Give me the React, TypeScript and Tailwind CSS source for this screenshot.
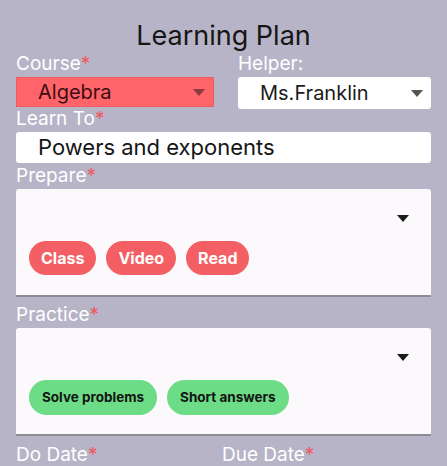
import type { ReactNode } from "react";

const font = { fontFamily: "Inter, 'Noto Sans', sans-serif" };

function Label({ children, required = true }: { children: ReactNode; required?: boolean }) {
  return (
    <div className="text-[19px] leading-[22px] text-white">
      {children}
      {required && <span className="text-[#f0575c]">*</span>}
    </div>
  );
}

function Caret({ className = "" }: { className?: string }) {
  return (
    <svg width="12" height="7" viewBox="0 0 12 7" className={className}>
      <path d="M0 0h12L6 7z" fill="currentColor" />
    </svg>
  );
}

function ChipBox({ chips, tone }: { chips: string[]; tone: "red" | "green" }) {
  return (
    <div className="relative h-[108px] rounded-t-[3px] border-b-2 border-[#8d8a96] bg-[#fbf9fb]">
      <Caret className="absolute right-[22px] top-[26px] text-[#1b1b1b]" />
      <div className="absolute left-[13px] top-[52px] flex gap-[10px]">
        {chips.map((c) =>
          tone === "red" ? (
            <span
              key={c}
              className="flex h-[34px] items-center rounded-full bg-[#f45f65] px-[12px] text-[16px] font-bold text-white"
            >
              {c}
            </span>
          ) : (
            <span
              key={c}
              className="flex h-[35px] items-center rounded-full bg-[#6cdc86] px-[13px] text-[13.5px] font-bold text-[#141414]"
            >
              {c}
            </span>
          )
        )}
      </div>
    </div>
  );
}

export default function App() {
  return (
    <div className="h-[466px] w-[447px] overflow-hidden bg-[#b7b4c8] px-4" style={font}>
      <h1 className="pt-[20px] text-center text-[27px] leading-[32px] font-normal text-[#161616]">Learning Plan</h1>

      <div className="mt-[1px] flex gap-[24px]">
        <div className="w-[198px]">
          <Label>Course</Label>
          <div className="mt-[2px] flex h-[30px] items-center justify-between border border-[#ee5a60] bg-[#ff646a] pl-[21px] pr-[8px]">
            <span className="text-[20px] text-[#3b0d12]">Algebra</span>
            <Caret className="text-[#8c3a3f]" />
          </div>
        </div>
        <div className="flex-1">
          <Label required={false}>Helper:</Label>
          <div className="mt-[2px] flex h-[32px] items-center justify-between rounded-[3px] bg-white pl-[22px] pr-[8px]">
            <span className="text-[20px] text-[#1b1b1b]">Ms.Franklin</span>
            <Caret className="text-[#555]" />
          </div>
        </div>
      </div>

      <div className="-mt-[1px]">
        <Label>Learn To</Label>
        <div className="mt-[2px] flex h-[31px] items-center rounded-[3px] bg-white pl-[22px]">
          <span className="text-[22px] text-[#151515]">Powers and exponents</span>
        </div>
      </div>

      <div className="mt-[2px]">
        <Label>Prepare</Label>
        <div className="mt-[2px]">
          <ChipBox chips={["Class", "Video", "Read"]} tone="red" />
        </div>
      </div>

      <div className="mt-[7px]">
        <Label>Practice</Label>
        <div className="mt-[2px]">
          <ChipBox chips={["Solve problems", "Short answers"]} tone="green" />
        </div>
      </div>

      <div className="mt-[8px] flex">
        <div className="w-[206px]">
          <Label>Do Date</Label>
        </div>
        <Label>Due Date</Label>
      </div>
    </div>
  );
}
